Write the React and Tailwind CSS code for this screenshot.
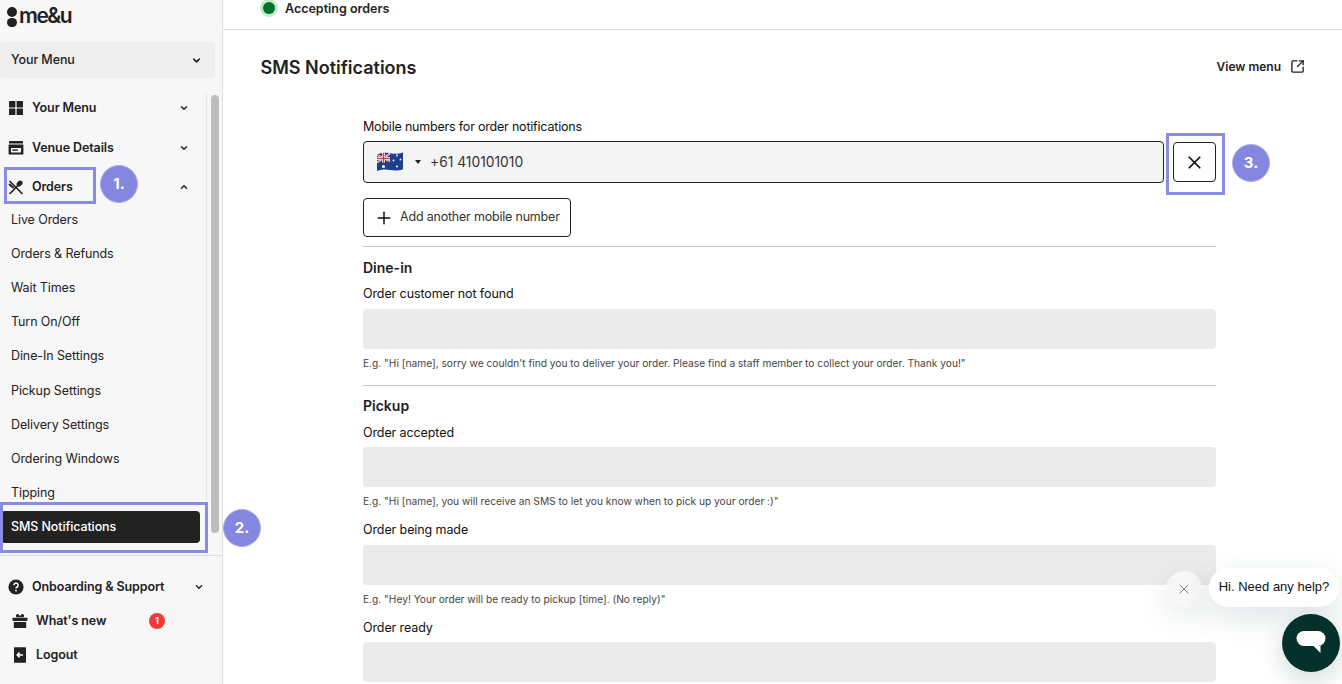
import React from 'react';
import { ChevronDown, ChevronUp, Plus, X, SquareArrowOutUpRight } from 'lucide-react';

const Chev = ({ up, s = 10 }) => up
  ? <ChevronUp size={s} strokeWidth={3.5} className="text-[#222]" />
  : <ChevronDown size={s} strokeWidth={3.5} className="text-[#222]" />;

const GridIcon = () => (
  <svg width="16" height="16" viewBox="0 0 16 16" fill="#222"><rect x="1" y="1" width="6.4" height="6.4" rx=".6"/><rect x="8.6" y="1" width="6.4" height="6.4" rx=".6"/><rect x="1" y="8.6" width="6.4" height="6.4" rx=".6"/><rect x="8.6" y="8.6" width="6.4" height="6.4" rx=".6"/></svg>
);
const StoreIcon = () => (
  <svg width="16" height="16" viewBox="0 0 16 16" fill="#222"><rect x="1" y="1" width="14" height="2.6" rx=".4"/><path fillRule="evenodd" d="M.6 4.6h14.8v10H.6zM3 8h10v4.4H3z"/><rect x="4.4" y="9.4" width="5.4" height="1.4"/></svg>
);
const CutleryIcon = () => (
  <svg width="16" height="16" viewBox="0 0 16 16" fill="none" stroke="#222" strokeWidth="1.7" strokeLinecap="round"><path d="M2 2.5 14 14.5"/><path d="M2 14.5 9.5 7"/><ellipse cx="11.6" cy="4.6" rx="2.5" ry="3.4" fill="#222" stroke="none" transform="rotate(45 11.6 4.6)"/><path d="M1.6 5.5 5 8.6" strokeWidth="2"/></svg>
);
const HelpIcon = () => (
  <svg width="16" height="16" viewBox="0 0 16 16"><circle cx="8" cy="8" r="7.6" fill="#222"/><path d="M5.9 6.2a2.1 2.1 0 1 1 3.2 1.8c-.7.4-1.1.8-1.1 1.5" fill="none" stroke="#fff" strokeWidth="1.5"/><circle cx="8" cy="11.6" r=".95" fill="#fff"/></svg>
);
const GiftIcon = () => (
  <svg width="16" height="16" viewBox="0 0 16 16" fill="#222"><path d="M4.4 4.2C2.8 2 5.4.2 6.6 1.6L8 3l1.4-1.4c1.2-1.4 3.8.4 2.2 2.6z"/><rect x=".6" y="4.8" width="14.8" height="3.2" rx=".4"/><rect x="1.8" y="9" width="12.4" height="6" rx=".4"/></svg>
);
const LogoutIcon = () => (
  <svg width="12" height="16" viewBox="0 0 12 16"><rect width="12" height="15.4" y=".3" rx=".6" fill="#222"/><path d="M9 8H3.4M5.6 5.6 3.2 8l2.4 2.4" fill="none" stroke="#fff" strokeWidth="1.5"/></svg>
);
const Flag = () => (
  <svg width="26" height="20" viewBox="0 0 26 20">
    <path d="M0 2.5C6 .5 9 .4 13 1.2s8 1 13-.6v16.6c-5 1.8-9 1.6-13 .9S6 17.300 0 19z" fill="#1f3f8a"/>
    <path d="M0 2.500C4 1.200 8 .7 13 1.200v8.500C8 9.300 4 9.700 0 10.800z" fill="#27408f"/>
    <path d="M0 2.800 13 9.500M13 1.500 0 10.500" stroke="#fff" strokeWidth="1.800"/>
    <path d="M0 2.800 13 9.500M13 1.500 0 10.500" stroke="#d8344a" strokeWidth=".7"/>
    <path d="M6.500 1v9.500M0 6.500h13" stroke="#fff" strokeWidth="3"/>
    <path d="M6.500 1v9.500M0 6.500h13" stroke="#d8344a" strokeWidth="1.600"/>
    <g fill="#fff"><circle cx="6.500" cy="14.500" r="1.500"/><circle cx="20" cy="3.500" r=".9"/><circle cx="20" cy="14.500" r="1"/><circle cx="16.500" cy="8.500" r=".9"/><circle cx="23.500" cy="7.500" r=".9"/></g>
  </svg>
);

const Step = ({ n, cls }) => (
  <div className={`absolute flex h-[38px] w-[38px] items-center justify-center rounded-full border border-[#a9aaea] bg-[#8586e0] text-[15px] font-bold text-white ${cls}`}>{n}</div>
);

const MainItem = ({ icon, label, up, cls = '' }) => (
  <div className={`flex items-center pl-2 pr-[17px] ${cls}`}>
    <span className="flex w-[24px] items-center">{icon}</span>
    <span className="flex-1 text-[12.5px] font-semibold tracking-[-0.1px] text-[#222]">{label}</span>
    <Chev up={up} />
  </div>
);

const subs = ['Live Orders', 'Orders & Refunds', 'Wait Times', 'Turn On/Off', 'Dine-In Settings', 'Pickup Settings', 'Delivery Settings', 'Ordering Windows', 'Tipping'];

const Field = ({ label, hint, cls = '' }) => (
  <div className={cls}>
    <div className="text-[12.5px] font-normal leading-[16px] tracking-[-0.1px] text-[#111]">{label}</div>
    <div className="mt-[6.500px] h-[40px] rounded bg-[#ebebeb]" />
    {hint && <div className="mt-[7px] text-[10.200px] leading-[14px] text-[#444]">{hint}</div>}
  </div>
);

export default function App() {
  return (
    <div className="relative flex h-[684px] w-[1342px] overflow-hidden bg-white font-['Inter',sans-serif] text-[#222]">
      <aside className="flex h-full w-[223px] shrink-0 flex-col border-r border-[#dedede] bg-[#f7f7f7]">
        <div className="flex h-[42px] items-start pl-[7px] pt-[6px]">
          <div className="flex w-[10px] flex-col gap-[1px] pt-[1px]">
            <span className="h-[9.500px] w-[9.500px] rounded-full bg-[#222]" />
            <span className="h-[9.500px] w-[9.500px] rounded-full bg-[#222]" />
          </div>
          <span className="ml-[2px] text-[21px] font-semibold leading-[20px] tracking-[-1.5px] text-[#222]">me&amp;u</span>
        </div>
        <div className="flex h-[36px] w-[215px] items-center justify-between rounded bg-[#eeeeee] pl-[11px] pr-[13px] text-[12.5px] font-medium tracking-[-0.1px]">
          <span>Your Menu</span>
          <Chev s={11} />
        </div>
        <div className="mt-[15px] flex h-[463px] border-b border-[#dedede]">
          <nav className="w-[207px] shrink-0 border-r border-[#e6e6e6]">
            <MainItem icon={<GridIcon />} label="Your Menu" cls="h-[30px]" />
            <MainItem icon={<StoreIcon />} label="Venue Details" cls="mt-[10px] h-[30px]" />
            <MainItem icon={<CutleryIcon />} label="Orders" up cls="mt-[9px] h-[30px]" />
            <div className="mt-[1px]">
              {subs.map((s) => (
                <div key={s} className="flex h-[34.200px] items-center pl-[11px] text-[12.5px] tracking-[-0.1px] text-[#222]">{s}</div>
              ))}
              <div className="ml-[1px] flex h-[32px] w-[199px] items-center rounded bg-[#222] pl-[10px] pt-[1px] text-[12.5px] font-medium tracking-[-0.1px] text-white">SMS Notifications</div>
            </div>
          </nav>
          <div className="flex-1 pl-[4px] pt-[2px]">
            <div className="h-[438px] w-[8px] rounded-full bg-[#bdbdbd]" />
          </div>
        </div>
        <div className="pt-[16px]">
          <div className="flex h-[30px] items-center pl-2 pr-[18px]">
            <span className="flex w-[24px] items-center"><HelpIcon /></span>
            <span className="flex-1 text-[12.5px] font-semibold tracking-[-0.1px]">Onboarding &amp; Support</span>
            <Chev />
          </div>
          <div className="mt-[4px] flex h-[30px] items-center pl-[12px]">
            <span className="flex w-[24px] items-center"><GiftIcon /></span>
            <span className="w-[113px] text-[12.5px] font-semibold tracking-[-0.1px]">What's new</span>
            <span className="flex h-[16px] w-[16px] items-center justify-center rounded-full bg-[#f23a3a] text-[9px] font-bold text-white">1</span>
          </div>
          <div className="mt-[4px] flex h-[30px] items-center pl-[14px]">
            <span className="flex w-[22px] items-center"><LogoutIcon /></span>
            <span className="text-[12.5px] font-semibold tracking-[-0.1px]">Logout</span>
          </div>
        </div>
      </aside>

      <main className="min-w-0 flex-1">
        <div className="flex h-[30px] items-start border-b border-[#dedede] pl-[37px]">
          <span className="-mt-[1px] flex h-[18px] w-[18px] items-center justify-center rounded-full bg-[#bfeec3]">
            <span className="h-[12px] w-[12px] rounded-full bg-[#03702f]" />
          </span>
          <span className="ml-[7px] text-[12.5px] font-semibold leading-[17px]">Accepting orders</span>
        </div>
        <div className="flex h-[76px] items-center justify-between pb-[1px] pl-[37.500px] pr-[37px]">
          <h1 className="text-[18px] font-semibold">SMS Notifications</h1>
          <div className="mb-[2px] flex items-center gap-[9px] text-[12px] font-semibold">
            View menu
            <SquareArrowOutUpRight size={15} strokeWidth={2.200} />
          </div>
        </div>
        <div className="ml-[140px] w-[853px]">
          <div className="mt-[13px] text-[12.5px] font-normal leading-[16px] tracking-[-0.2px] text-[#111]">Mobile numbers for order notifications</div>
          <div className="mt-[6px] flex h-[42px] gap-[9px]">
            <div className="flex flex-1 items-center rounded border border-[#222] bg-[#f4f4f4] pl-[13px] text-[13.800px] text-[#333]">
              <Flag />
              <span className="ml-[12px] h-0 w-0 border-x-[3.500px] border-t-[4px] border-x-transparent border-t-[#222]" />
              <span className="ml-[9px]">+61 410101010</span>
            </div>
            <div className="mt-[1px] flex h-[40px] w-[43px] items-center justify-center rounded border border-[#222] bg-white">
              <X size={21} strokeWidth={2} className="text-[#111]" />
            </div>
          </div>
          <div className="mt-[15px] flex h-[39px] w-[208px] items-center whitespace-nowrap rounded border border-[#222] pl-[10px] text-[12.5px] tracking-[-0.2px] text-[#333]">
            <Plus size={20} strokeWidth={1.800} className="text-[#111]" />
            <span className="ml-[6px]">Add another mobile number</span>
          </div>
          <div className="mt-[9px] border-t border-[#c8c8c8]" />
          <div className="mt-[12px] text-[14px] font-semibold leading-[18px]">Dine-in</div>
          <Field cls="mt-[9px]" label="Order customer not found" hint={'E.g. "Hi [name], sorry we couldn\'t find you to deliver your order. Please find a staff member to collect your order. Thank you!"'} />
          <div className="mt-[15px] border-t border-[#c8c8c8]" />
          <div className="mt-[11px] text-[14px] font-semibold leading-[18px]">Pickup</div>
          <Field cls="mt-[10px]" label="Order accepted" hint={'E.g. "Hi [name], you will receive an SMS to let you know when to pick up your order :)"'} />
          <Field cls="mt-[14px]" label="Order being made" hint={'E.g. "Hey! Your order will be ready to pickup [time]. (No reply)"'} />
          <Field cls="mt-[14px]" label="Order ready" />
        </div>
      </main>

      {/* annotations */}
      <div className="absolute left-[4px] top-[167px] h-[37px] w-[92px] border-[3px] border-[#8a8be2]" />
      <Step n="1." cls="left-[100px] top-[165px]" />
      <div className="absolute left-0 top-[502px] h-[51px] w-[208px] border-[3px] border-[#8a8be2]" />
      <Step n="2." cls="left-[223px] top-[509px]" />
      <div className="absolute left-[1166px] top-[133px] h-[62px] w-[59px] border-[3px] border-[#8a8be2]" />
      <Step n="3." cls="left-[1232px] top-[144px]" />

      {/* chat widget */}
      <div className="absolute left-[1166px] top-[571px] flex h-[36px] w-[36px] items-center justify-center rounded-full bg-[#f7f7f7] shadow-[0_10px_30px_rgba(30,70,70,0.12)]">
        <X size={16} strokeWidth={1.200} className="text-[#666]" />
      </div>
      <div className="absolute left-[1209px] top-[568px] flex h-[39px] w-[130px] items-center justify-center rounded-[20px] bg-white pb-[2px] font-['Liberation_Sans',sans-serif] text-[13px] text-[#111] shadow-[0_10px_30px_rgba(30,70,70,0.14)]">Hi. Need any help?</div>
      <div className="absolute left-[1282px] top-[614px] flex h-[58px] w-[58px] items-center justify-center rounded-full bg-[#04312c] shadow-[0_8px_24px_rgba(30,70,70,0.2)]">
        <svg width="30" height="26" viewBox="0 0 30 26" fill="#fff"><rect x="0.500" y="1" width="29" height="15" rx="7.500"/><path d="M17.500 16h7v7z"/></svg>
      </div>
    </div>
  );
}
